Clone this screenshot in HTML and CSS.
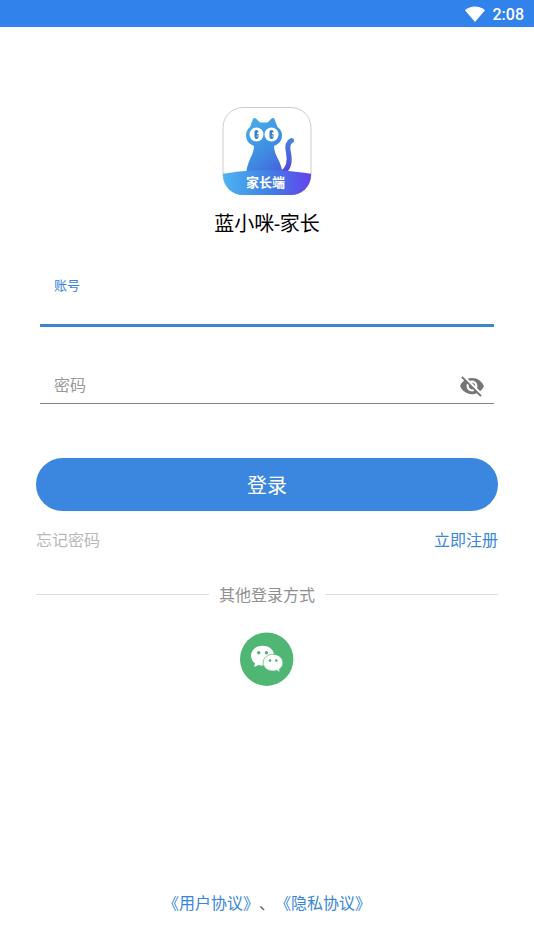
FILE: index.html
```html
<!DOCTYPE html>
<html lang="zh-CN">
<head>
<meta charset="utf-8">
<meta name="viewport" content="width=device-width, initial-scale=1">
<title>蓝小咪-家长</title>
<link rel="stylesheet" href="styles.css">
</head>
<body>
<header class="status-bar">
  <svg class="wifi" viewBox="0 0 20 16" aria-hidden="true"><path d="M0 4.200Q4.500.5 10 .5T20 4.200L10 16Z" fill="#fff"/></svg>
  <span class="clock">2:08</span>
</header>
<main class="content">
  <svg class="logo" viewBox="0 0 90 90" aria-hidden="true">
    <defs>
      <linearGradient id="band" x1="0" y1="0" x2="1" y2="0">
        <stop offset="0" stop-color="#4db5f2"/><stop offset=".5" stop-color="#3f83e4"/><stop offset="1" stop-color="#6541ee"/>
      </linearGradient>
      <linearGradient id="cat" gradientUnits="userSpaceOnUse" x1="24" y1="14" x2="66" y2="68">
        <stop offset="0" stop-color="#48afea"/><stop offset=".55" stop-color="#3e8be2"/><stop offset="1" stop-color="#4b55dc"/>
      </linearGradient>
      <linearGradient id="tail" x1="0" y1="0" x2="0" y2="1">
        <stop offset="0" stop-color="#4480dc"/><stop offset="1" stop-color="#5a42df"/>
      </linearGradient>
      <clipPath id="tile"><rect x="1" y="1" width="88" height="88" rx="20"/></clipPath>
    </defs>
    <rect x="1" y="1.500" width="88" height="87" rx="20" fill="#fff" stroke="#ccc"/>
    <path d="M60 67C68 62 68 54 66.500 47C65 40 66 36 69.500 34.500" fill="none" stroke="url(#tail)" stroke-width="5" stroke-linecap="round"/>
    <path d="M28 21L31 13Q32.500 11 34.500 13L38 16.500H45.500L49 13Q51 11 52.500 13L55.500 21Q60 24 60 29.500Q60 37 52 40Q52 45 55.500 52Q60 60 61 70H24Q24.500 60 28.500 52Q32 45 32 40Q24 37 24 29.500Q24 24 28 21Z" fill="url(#cat)"/>
    <circle cx="34.500" cy="28.500" r="7" fill="#fff"/><circle cx="49.500" cy="28.500" r="7" fill="#fff"/>
    <g fill="#3182c8"><rect x="32.500" y="24" width="4" height="9" rx="2"/><rect x="47.500" y="24" width="4" height="9" rx="2"/></g>
    <path d="M35 27.300H37M50 27.300H52M34.800 30H35.600M49.800 30H50.600" stroke="#fff" stroke-width="1.500"/>
    <path d="M0 68Q44 60 90 68V90H0Z" fill="url(#band)" clip-path="url(#tile)"/>
    <text x="43.500" y="81" class="logo-text">家长端</text>
  </svg>
  <h1 class="title">蓝小咪-家长</h1>
  <form class="form">
    <div class="field field-active">
      <label for="account">账号</label>
      <input id="account" type="text">
    </div>
    <div class="field field-password">
      <label for="password">密码</label>
      <input id="password" type="password">
      <button class="eye" type="button" aria-label="显示密码">
        <svg viewBox="0 0 24 24" aria-hidden="true"><path fill="#757575" d="M12 7c2.760 0 5 2.240 5 5 0 .65-.13 1.260-.36 1.830l2.920 2.920c1.510-1.260 2.700-2.890 3.430-4.750-1.730-4.390-6-7.500-11-7.500-1.400 0-2.740.25-3.980.7l2.160 2.160C10.740 7.130 11.350 7 12 7zM2 4.270l2.280 2.280.46.46C3.080 8.300 1.780 10.020 1 12c1.730 4.390 6 7.500 11 7.500 1.550 0 3.030-.3 4.380-.84l.42.42L19.730 22 21 20.730 3.270 3 2 4.270zM7.530 9.800l1.550 1.550c-.05.21-.08.43-.08.65 0 1.660 1.340 3 3 3 .22 0 .44-.03.65-.08l1.550 1.550c-.67.33-1.410.53-2.200.53-2.760 0-5-2.240-5-5 0-.79.2-1.530.53-2.200zm4.310-.78l3.150 3.150.02-.16c0-1.660-1.340-3-3-3l-.17.01z"/></svg>
      </button>
    </div>
    <button class="submit" type="submit">登录</button>
  </form>
  <nav class="links">
    <a class="muted" href="#forgot">忘记密码</a>
    <a href="#register">立即注册</a>
  </nav>
  <div class="divider"><span>其他登录方式</span></div>
  <button class="wechat" type="button" aria-label="微信登录">
    <svg viewBox="0 0 54 54" aria-hidden="true">
      <circle cx="26.700" cy="27.200" r="26.700" fill="#50b674"/>
      <path d="M22.500 13.800C16 13.800 11 18.200 11 23.800C11 27 12.500 29.500 15 31.400L14.200 35L18.500 32.900Q21 33.800 24 33.500L34 22C33 17 28.500 13.800 22.500 13.800Z" fill="#fff"/>
      <path d="M33 22.300C27.500 22.300 23.200 26 23.200 30.700C23.200 35.400 27.500 39 33 39Q35 39 36.800 38.400L40 40.300L39.300 37.200C41.500 35.700 42.900 33.300 42.900 30.700C42.900 26 38.500 22.300 33 22.300Z" fill="#fff" stroke="#50b674" stroke-width=".7"/>
      <g fill="#50b674"><circle cx="18.700" cy="20.800" r="1.700"/><circle cx="26.400" cy="20.800" r="1.700"/><circle cx="30" cy="28.600" r="1.300"/><circle cx="36.300" cy="28.600" r="1.300"/></g>
    </svg>
  </button>
  <footer class="legal"><a href="#terms">《用户协议》</a><span>、</span><a href="#privacy">《隐私协议》</a></footer>
</main>
</body>
</html>
```
FILE: styles.css
```css
* { box-sizing: border-box; }

body {
  margin: 0;
  min-height: 100vh;
  display: flex;
  flex-direction: column;
  background: #fff;
  color: #000;
  font: 16px/24px "Noto Sans CJK SC", sans-serif;
  text-spacing-trim: space-all;
}

button, input {
  margin: 0;
  padding: 0;
  border: 0;
  background: none;
  font: inherit;
  color: inherit;
}

button { cursor: pointer; }
a { color: #3b86d8; text-decoration: none; }
svg { display: block; }

.status-bar {
  display: flex;
  align-items: center;
  justify-content: flex-end;
  gap: 8px;
  height: 27px;
  padding: 0 10px;
  background: #3182eb;
  color: #fff;
}
.wifi { width: 20px; height: 16px; }
.clock { font-family: Roboto, sans-serif; font-weight: 500; padding-top: 2px; }

.content {
  flex: 1;
  display: flex;
  flex-direction: column;
  align-items: center;
  padding: 79px 36px 35px;
}

.logo { width: 90px; height: 90px; }
.logo-text {
  fill: #fff;
  font-size: 13px;
  font-weight: 700;
  text-anchor: middle;
}

.title {
  margin: 13px 0 36px;
  font-family: Roboto, "Noto Sans CJK SC", sans-serif;
  font-size: 20px;
  line-height: 30px;
  font-weight: 400;
}

.form { width: 100%; display: flex; flex-direction: column; }

.field { display: flex; margin: 0 4px; padding: 0 14px; }
.field input { flex: 1; min-width: 0; outline: none; }
.field-active {
  flex-direction: column;
  height: 52px;
  border-bottom: 3px solid #3f84cf;
}
.field-active label { color: #3b82d8; font-size: 13px; line-height: 20px; }

.field-password {
  align-items: center;
  height: 40px;
  margin-top: 37px;
  padding-right: 9px;
  border-bottom: 1px solid #868686;
}
.field-password label { color: #999; }
.eye { width: 26px; height: 26px; margin-top: 4px; }

.submit {
  height: 53px;
  margin-top: 54px;
  border-radius: 27px;
  background: #3b86df;
  color: #fff;
  font-size: 20px;
}

.links {
  width: 100%;
  display: flex;
  justify-content: space-between;
  margin-top: 16px;
}
.links .muted { color: #b8b8b8; }

.divider {
  width: 100%;
  display: flex;
  align-items: center;
  gap: 10px;
  margin: 31px 0 26px;
  color: #909090;
}
.divider::before, .divider::after {
  content: "";
  flex: 1;
  height: 1px;
  background: #ddd;
}

.wechat { width: 54px; height: 54px; border-radius: 50%; }
.legal { margin-top: auto; color: #666; }
```
